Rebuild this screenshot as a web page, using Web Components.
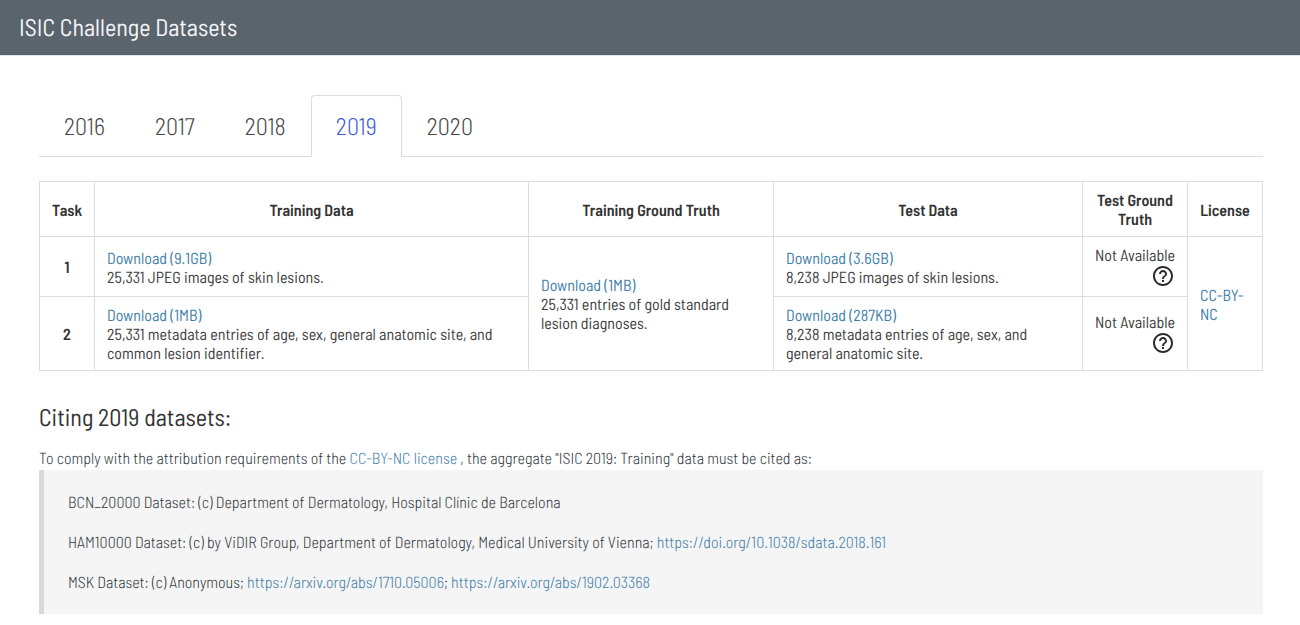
<!DOCTYPE html>
<html lang="en">
<head>
<meta charset="utf-8">
<title>ISIC Challenge Datasets</title>
<style>
html,body{margin:0;background:#fff}
body{font-family:"Barlow Semi Condensed",Roboto,"Open Sans",sans-serif;font-size:16px;line-height:19px;color:#404040;text-rendering:geometricPrecision}
</style>
</head>
<body>
<isic-page></isic-page>
<script>
class AppHeader extends HTMLElement{
  constructor(){super();this.attachShadow({mode:'open'}).innerHTML=`<style>
  :host{display:flex;align-items:center;box-sizing:border-box;height:55px;padding:0 19px 1px;background:#5a646d;box-shadow:0 1px #e2e2ea;color:#f4f5f6;font-size:24px;line-height:30px;font-weight:400}
  </style><slot></slot>`}
}
class YearTabs extends HTMLElement{
  constructor(){super();this.attachShadow({mode:'open'}).innerHTML=`<style>
  :host{display:flex;height:62px;box-sizing:border-box;box-shadow:inset 0 -1px #ddd}
  </style><slot></slot>`}
}
class YearTab extends HTMLElement{
  constructor(){super();this.attachShadow({mode:'open'}).innerHTML=`<style>
  :host{display:flex;align-items:center;box-sizing:border-box;height:62px;padding:0 24px 1px;border:1px solid transparent;border-bottom:0;font-size:24px;line-height:30px;font-weight:300;color:#484848}
  :host([active]){background:#fff;border-color:#ddd;border-radius:4px 4px 0 0;color:#3f5bd0}
  </style><slot></slot>`}
}
class DataTable extends HTMLElement{
  constructor(){super();this.attachShadow({mode:'open'}).innerHTML=`<style>
  :host{display:grid;grid-template-columns:54px 433px 244px 308px 104px 74px;grid-template-rows:54px 59px 73px;gap:1px;padding:1px;background:#ddd;width:max-content}
  </style><slot></slot>`}
}
class DataCell extends HTMLElement{
  constructor(){super();this.attachShadow({mode:'open'}).innerHTML=`<style>
  :host{display:flex;flex-direction:column;justify-content:center;align-items:flex-start;padding:2px 12px 0;background:#fff}
  :host([head]){align-items:center;text-align:center;font-weight:600;color:#333}
  :host([tall]){grid-row:span 2}
  :host([end]){align-items:flex-end;white-space:nowrap;padding-top:0}
  </style><slot></slot>`}
}
class HelpIcon extends HTMLElement{
  constructor(){super();this.attachShadow({mode:'open'}).innerHTML=`<style>
  :host{display:block;height:22px}svg{display:block;margin-top:-1px}
  </style><svg width="24" height="24" viewBox="0 0 24 24" fill="#2b2b2b"><path d="M11 18h2v-2h-2v2zm1-16C6.48 2 2 6.48 2 12s4.48 10 10 10 10-4.48 10-10S17.52 2 12 2zm0 18c-4.41 0-8-3.59-8-8s3.59-8 8-8 8 3.59 8 8-3.59 8-8 8zm0-14c-2.21 0-4 1.79-4 4h2c0-1.1.9-2 2-2s2 .9 2 2c0 2-3 1.75-3 5h2c0-2.25 3-2.5 3-5 0-2.21-1.79-4-4-4z"/></svg>`}
}
class TextLink extends HTMLElement{
  constructor(){super();this.attachShadow({mode:'open'}).innerHTML=`<style>
  :host{display:inline;color:#427fa9}a{color:inherit;text-decoration:none}
  </style><a href="#"><slot></slot></a>`}
}
class CiteBox extends HTMLElement{
  constructor(){super();this.attachShadow({mode:'open'}).innerHTML=`<style>
  :host{display:flex;flex-direction:column;gap:16px;box-sizing:border-box;height:144px;padding:20px 24px 0;border-left:5px solid #d9d9d9;background:#f5f5f5}
  </style><slot></slot>`}
}
class CiteLine extends HTMLElement{
  constructor(){super();this.attachShadow({mode:'open'}).innerHTML=`<style>
  :host{display:block;height:24px;line-height:26px;font-weight:300;color:#33393f;white-space:pre}
  </style><slot></slot>`}
}
class IsicPage extends HTMLElement{
  constructor(){super();this.attachShadow({mode:'open'}).innerHTML=`<style>
  :host{display:block}
  main{padding:40px 37px 0 39px}
  data-table{margin-top:24px}
  h2{margin:30px 0 0;font-size:24px;line-height:32px;font-weight:400;color:#333;height:32px}
  .intro{margin-top:13px}
  </style>
  <app-header>ISIC Challenge Datasets</app-header>
  <main>
  <year-tabs>
    <year-tab>2016</year-tab>
    <year-tab>2017</year-tab>
    <year-tab>2018</year-tab>
    <year-tab active>2019</year-tab>
    <year-tab>2020</year-tab>
  </year-tabs>
  <data-table>
    <data-cell head>Task</data-cell>
    <data-cell head>Training Data</data-cell>
    <data-cell head>Training Ground Truth</data-cell>
    <data-cell head>Test Data</data-cell>
    <data-cell head>Test Ground Truth</data-cell>
    <data-cell head>License</data-cell>

    <data-cell head>1</data-cell>
    <data-cell><text-link>Download (9.1GB)</text-link><span>25,331 JPEG images of skin lesions.</span></data-cell>
    <data-cell tall><text-link>Download (1MB)</text-link><span>25,331 entries of gold standard lesion diagnoses.</span></data-cell>
    <data-cell><text-link>Download (3.6GB)</text-link><span>8,238 JPEG images of skin lesions.</span></data-cell>
    <data-cell end><span>Not Available</span><help-icon></help-icon></data-cell>
    <data-cell tall><text-link>CC-BY-NC</text-link></data-cell>

    <data-cell head>2</data-cell>
    <data-cell><text-link>Download (1MB)</text-link><span>25,331 metadata entries of age, sex, general anatomic site, and common lesion identifier.</span></data-cell>
    <data-cell><text-link>Download (287KB)</text-link><span>8,238 metadata entries of age, sex, and general anatomic site.</span></data-cell>
    <data-cell end><span>Not Available</span><help-icon></help-icon></data-cell>
  </data-table>
  <h2>Citing 2019 datasets:</h2>
  <cite-line class="intro">To comply with the attribution requirements of the <text-link>CC-BY-NC license</text-link> , the aggregate "ISIC 2019: Training" data must be cited as:</cite-line>
  <cite-box>
    <cite-line>BCN_20000 Dataset: (c) Department of Dermatology, Hospital Clínic de Barcelona</cite-line>
    <cite-line>HAM10000 Dataset: (c) by ViDIR Group, Department of Dermatology, Medical University of Vienna; <text-link>https://doi.org/10.1038/sdata.2018.161</text-link></cite-line>
    <cite-line>MSK Dataset: (c) Anonymous; <text-link>https://arxiv.org/abs/1710.05006</text-link>; <text-link>https://arxiv.org/abs/1902.03368</text-link></cite-line>
  </cite-box>
  </main>`}
}
customElements.define('app-header',AppHeader);
customElements.define('year-tabs',YearTabs);
customElements.define('year-tab',YearTab);
customElements.define('data-table',DataTable);
customElements.define('data-cell',DataCell);
customElements.define('help-icon',HelpIcon);
customElements.define('text-link',TextLink);
customElements.define('cite-box',CiteBox);
customElements.define('cite-line',CiteLine);
customElements.define('isic-page',IsicPage);
</script>
</body>
</html>
